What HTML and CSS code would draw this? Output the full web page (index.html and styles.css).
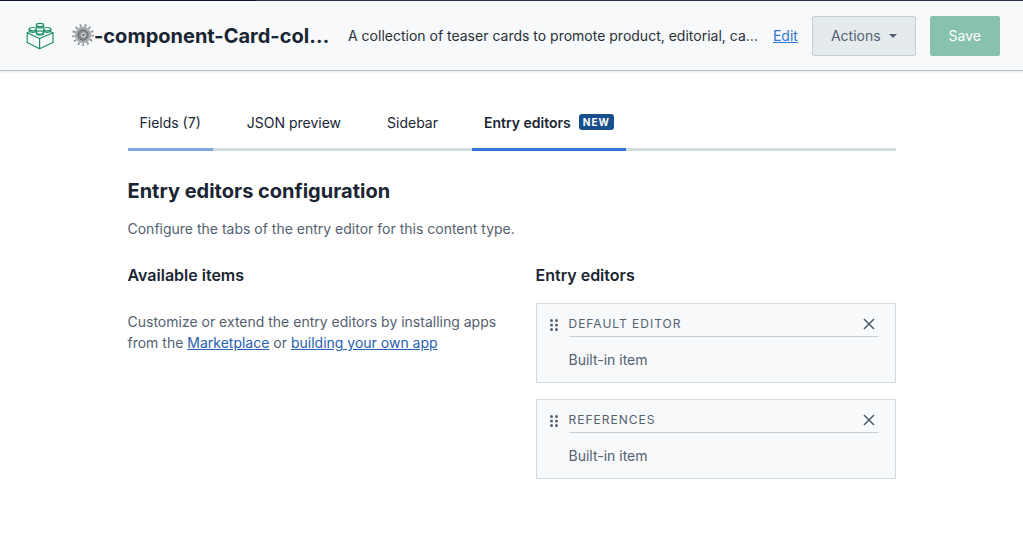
FILE: index.html
```html
<!DOCTYPE html>
<html lang="en">
<head>
    <meta charset="UTF-8">
    <meta name="viewport" content="width=device-width, initial-scale=1.0">
    <title>Entry editors</title>
    <link rel="stylesheet" href="styles.css">
</head>
<body>
    <header class="topbar">
        <svg class="brick" viewBox="0 0 28 28" fill="#f7f9fa" stroke="#1c8f62" stroke-width="1.2" stroke-linejoin="round">
            <path d="M1.200 10.800L14 5L27 10.800V20.500L13.600 26.700L1.200 20.500Z" stroke="none"/>
            <path d="M3.500 9.700L1.200 10.800V20.500L13.600 26.700L27 20.500V10.800L24.500 9.700M1.200 10.800L13.600 16.500L27 10.800M13.600 16.500V26.700" fill="none"/>
            <path d="M10.400 3V4.800C11.500 6.600 16.500 6.600 17.600 4.800V3"/>
            <ellipse cx="14" cy="3" rx="3.600" ry="1.700"/>
            <path d="M3.200 7.200V9C4.300 10.800 9.300 10.800 10.400 9V7.200"/>
            <ellipse cx="6.800" cy="7.200" rx="3.600" ry="1.700"/>
            <path d="M17.600 7.200V9C18.700 10.800 23.700 10.800 24.800 9V7.200"/>
            <ellipse cx="21.200" cy="7.200" rx="3.600" ry="1.700"/>
            <path d="M10.400 10.600V12C11.500 13.600 16.500 13.600 17.600 12V10.600"/>
            <ellipse cx="14" cy="10.600" rx="3.600" ry="1.700"/>
        </svg>
        <h1 class="title">
            <svg class="gear" viewBox="0 0 24 24">
                <circle cx="12" cy="12" r="10.500" fill="none" stroke="#8d9193" stroke-width="3" stroke-dasharray="1.800 3.275"/>
                <circle cx="12" cy="12" r="7.300" fill="#8f9395" stroke="#a7abad" stroke-width="3.400"/>
                <circle cx="12" cy="12" r="5.600" fill="#83888b" stroke="#666a6e" stroke-width="1"/>
                <circle cx="12.500" cy="12" r="3" fill="#d0d3d4" stroke="#9da1a3" stroke-width="1"/>
                <circle cx="12.500" cy="12" r="1.200" fill="#4b4f54"/>
            </svg>-component-Card-collection
        </h1>
        <p class="description">A collection of teaser cards to promote product, editorial, campaign content</p>
        <a class="edit" href="#">Edit</a>
        <button class="btn btn-actions" type="button">Actions
            <svg width="8" height="4" viewBox="0 0 8 4"><path d="M0 0H8L4 4Z" fill="#536171"/></svg>
        </button>
        <button class="btn btn-save" type="button">Save</button>
    </header>

    <main class="container">
        <nav class="tabs">
            <a class="tab tab-hover" href="#">Fields (7)</a>
            <a class="tab" href="#">JSON preview</a>
            <a class="tab" href="#">Sidebar</a>
            <a class="tab tab-active" href="#">Entry editors <span class="badge">NEW</span></a>
        </nav>

        <h2>Entry editors configuration</h2>
        <p class="text">Configure the tabs of the entry editor for this content type.</p>

        <div class="columns">
            <section>
                <h3>Available items</h3>
                <p class="text note">Customize or extend the entry editors by installing apps<br>from the <a href="#">Marketplace</a> or <a href="#">building your own app</a></p>
            </section>
            <section>
                <h3>Entry editors</h3>
                <div class="cards">
                    <article class="card">
                        <svg class="handle" width="8" height="12" viewBox="0 0 8 12" fill="#536171">
                            <circle cx="1.500" cy="1.500" r="1.500"/><circle cx="6.500" cy="1.500" r="1.500"/>
                            <circle cx="1.500" cy="6" r="1.500"/><circle cx="6.500" cy="6" r="1.500"/>
                            <circle cx="1.500" cy="10.500" r="1.500"/><circle cx="6.500" cy="10.500" r="1.500"/>
                        </svg>
                        <div class="card-body">
                            <div class="card-head">
                                <h4>Default editor</h4>
                                <button class="close" type="button" aria-label="Remove">
                                    <svg width="12" height="12" viewBox="0 0 12 12" stroke="#536171" stroke-width="1.6"><path d="M1 1L11 11M11 1L1 11"/></svg>
                                </button>
                            </div>
                            <p class="text">Built-in item</p>
                        </div>
                    </article>
                    <article class="card">
                        <svg class="handle" width="8" height="12" viewBox="0 0 8 12" fill="#536171">
                            <circle cx="1.500" cy="1.500" r="1.500"/><circle cx="6.500" cy="1.500" r="1.500"/>
                            <circle cx="1.500" cy="6" r="1.500"/><circle cx="6.500" cy="6" r="1.500"/>
                            <circle cx="1.500" cy="10.500" r="1.500"/><circle cx="6.500" cy="10.500" r="1.500"/>
                        </svg>
                        <div class="card-body">
                            <div class="card-head">
                                <h4>References</h4>
                                <button class="close" type="button" aria-label="Remove">
                                    <svg width="12" height="12" viewBox="0 0 12 12" stroke="#536171" stroke-width="1.6"><path d="M1 1L11 11M11 1L1 11"/></svg>
                                </button>
                            </div>
                            <p class="text">Built-in item</p>
                        </div>
                    </article>
                </div>
            </section>
        </div>
    </main>
</body>
</html>
```

FILE: styles.css
```css
* {
    box-sizing: border-box;
}
body {
    margin: 0;
    font-family: Inter, sans-serif;
    font-size: 14px;
    line-height: 21px;
    color: #192532;
    background-color: #fff;
}
h1, h2, h3, h4, p {
    margin: 0;
}
.topbar {
    display: flex;
    align-items: center;
    height: 71px;
    padding: 1px 23px 0 26px;
    background: linear-gradient(to right, #10152a 25%, #2b3150 25%) top / 100% 1px no-repeat #f7f9fa;
    border-bottom: 1px solid #b4c3ca;
    box-shadow: 0 1px 3px rgba(0, 0, 0, 0.1);
}
.brick {
    flex: none;
    width: 28px;
    height: 28px;
    margin-right: 18px;
}
.title {
    flex: none;
    width: 260px;
    margin-right: 16px;
    font-size: 20px;
    line-height: 32px;
    font-weight: 700;
    white-space: nowrap;
    overflow: hidden;
    text-overflow: ellipsis;
}
.gear {
    width: 22px;
    height: 22px;
    vertical-align: -3px;
}
.description {
    flex: 1;
    min-width: 0;
    margin-right: 14px;
    color: #2a3039;
    white-space: nowrap;
    overflow: hidden;
    text-overflow: ellipsis;
}
.edit {
    margin-right: 14px;
    color: #2e75d4;
}
.btn {
    flex: none;
    height: 40px;
    padding: 0 18px;
    font: inherit;
    border: 1px solid #c3cfd5;
    border-radius: 2px;
    cursor: pointer;
}
.btn-actions {
    display: flex;
    align-items: center;
    gap: 8px;
    margin-right: 14px;
    color: #536171;
    background-color: #e5ebed;
}
.btn-save {
    color: #fff;
    background-color: #88c1ad;
    border-color: #88c1ad;
}
.container {
    max-width: 768px;
    margin: 0 auto;
    padding: 25px 0;
}
.tabs {
    display: flex;
    gap: 22px;
    margin-bottom: 24px;
    box-shadow: inset 0 -3px 0 #d3dce0;
}
.tab {
    display: flex;
    align-items: center;
    gap: 8px;
    height: 55px;
    padding: 0 12px;
    color: #192532;
    text-decoration: none;
    border-bottom: 3px solid transparent;
}
.tab-hover {
    border-color: #82a6dc;
}
.tab-active {
    font-weight: 600;
    border-color: #2e75d4;
}
.badge {
    padding: 0 4px;
    font-size: 10px;
    line-height: 16px;
    font-weight: 700;
    letter-spacing: 1px;
    color: #fff;
    background-color: #174e8c;
    border-radius: 3px;
}
h2 {
    margin-bottom: 11px;
    font-size: 20px;
    line-height: 32px;
    font-weight: 700;
}
.text {
    color: #536171;
}
.text a {
    color: #2660b0;
}
.columns {
    display: grid;
    grid-template-columns: 1fr 1fr;
    gap: 48px;
    margin-top: 24px;
}
.columns > section {
    min-width: 0;
}
h3 {
    font-size: 16px;
    line-height: 24px;
    font-weight: 600;
}
.note {
    margin-top: 24px;
    white-space: nowrap;
}
.cards {
    display: flex;
    flex-direction: column;
    gap: 16px;
    margin-top: 16px;
}
.card {
    display: flex;
    gap: 11px;
    padding: 7px 16px 12px 13px;
    background-color: #f7f9fa;
    border: 1px solid #d3dce0;
}
.handle {
    margin-top: 8px;
}
.card-body {
    flex: 1;
}
.card-head {
    display: flex;
    align-items: center;
    justify-content: space-between;
    height: 26px;
    margin-bottom: 12px;
    border-bottom: 1px solid #c3cfd5;
}
h4 {
    font-size: 12px;
    font-weight: 400;
    letter-spacing: 1px;
    text-transform: uppercase;
    color: #536171;
}
.close {
    display: flex;
    padding: 4px;
    border: 0;
    background: none;
    cursor: pointer;
}
```
